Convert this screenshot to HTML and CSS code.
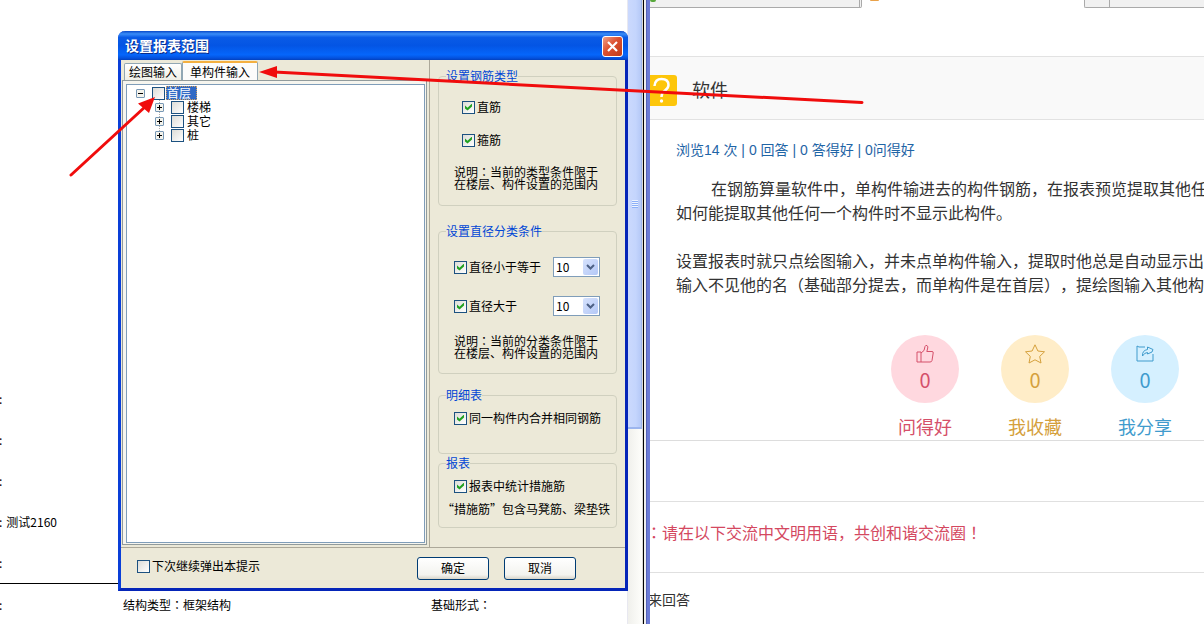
FILE: index.html
```html
<!DOCTYPE html>
<html lang="zh-CN">
<head>
<meta charset="utf-8">
<title>设置报表范围</title>
<link rel="stylesheet" href="styles.css">
</head>
<body>
<main class="desktop">
  <section class="report">
    <div class="sheet">
      <div class="sheet-row"><span>:</span></div>
      <div class="sheet-row"><span>:</span></div>
      <div class="sheet-row"><span>:</span></div>
      <div class="sheet-row"><span>:</span><span>测试2160</span></div>
      <div class="sheet-row ruled"><span>:</span></div>
      <div class="sheet-row columns"><span>:</span><span>结构类型<i class="mid" lang="zh-TW">：</i>框架结构</span><span>基础形式<i class="mid" lang="zh-TW">：</i></span></div>
    </div>
    <div class="scrollbar"><div class="thumb"><span class="grip"></span></div></div>
    <div class="frame-edge"></div>
  </section>

  <section class="page">
    <div class="strip">
      <div class="strip-left"><span class="dot-green"></span></div>
      <div class="strip-mid"><span class="dot-orange"></span></div>
      <div class="strip-right"></div>
    </div>
    <header class="question">
      <svg class="q-icon" viewBox="0 0 27 31" aria-hidden="true">
        <path d="M0 0H24Q27 0 27 3V28Q27 31 24 31H0Z" fill="#fdc60b"/>
        <path d="M4.500 11Q5 4 11.500 4Q18.500 4 18.500 10Q18.500 13 15 15.500Q11.500 18 11.500 22" fill="none" stroke="#fff" stroke-width="2.500"/>
        <circle cx="11.500" cy="26" r="1.700" fill="#fff"/>
      </svg>
      <h1>软件</h1>
    </header>
    <article class="post">
      <p class="meta">浏览14 次 | 0 回答 | 0 答得好 | 0问得好</p>
      <p class="text indent">在钢筋算量软件中，单构件输进去的构件钢筋，在报表预览提取其他任何</p>
      <p class="text">如何能提取其他任何一个构件时不显示此构件。</p>
      <p class="text gap">设置报表时就只点绘图输入，并未点单构件输入，提取时他总是自动显示出来</p>
      <p class="text">输入不见他的名（基础部分提去，而单构件是在首层），提绘图输入其他构件</p>
    </article>
    <div class="actions">
      <button class="action like" type="button">
        <span class="circle">
          <svg viewBox="0 0 20 20" aria-hidden="true"><path d="M2 8H6V18H2ZM6 9L9 6.500L10 2.500Q10.500 1 12 1.500Q13.500 2.500 12.500 5L11.800 7.500H17Q18.500 7.500 18.200 9L17 16.500Q16.700 18 15 18H6"/></svg>
          <span>0</span>
        </span>
        <span class="caption">问得好</span>
      </button>
      <button class="action star" type="button">
        <span class="circle">
          <svg viewBox="0 0 20 20" aria-hidden="true"><path d="M10 .8L12.900 7L19.500 7.800L14.700 12.400L16 19L10 15.800L4 19L5.300 12.400L.5 7.800L7.100 7Z"/></svg>
          <span>0</span>
        </span>
        <span class="caption">我收藏</span>
      </button>
      <button class="action share" type="button">
        <span class="circle">
          <svg viewBox="0 0 20 20" aria-hidden="true"><path d="M10 3H4L2 2V17H18V10M7.500 12Q7 6.500 12.500 5.500V3L18 5.500L17 8L12.500 10V8.500Q9.500 8.500 7.500 12Z"/></svg>
          <span>0</span>
        </span>
        <span class="caption">我分享</span>
      </button>
    </div>
    <div class="blank"></div>
    <p class="notice"><i class="mid" lang="zh-TW">：</i>请在以下交流中文明用语，共创和谐交流圈<i class="mid" lang="zh-TW">！</i></p>
    <p class="answer">来回答</p>
  </section>
</main>

<form class="dialog">
  <div class="titlebar">
    <h2>设置报表范围</h2>
    <button class="close" type="button" aria-label="关闭">
      <svg viewBox="0 0 19 19" aria-hidden="true"><path d="M5 5L14 14M14 5L5 14" stroke="#fff" stroke-width="2.200"/></svg>
    </button>
  </div>
  <div class="body">
    <div class="left">
      <div class="tabs">
        <button class="tab" type="button">绘图输入</button>
        <button class="tab active" type="button">单构件输入</button>
      </div>
      <div class="tree-frame">
        <ul class="tree">
          <li><span class="node minus"></span><label><input type="checkbox"><span class="selected">首层</span></label>
            <ul>
              <li><span class="node plus"></span><label><input type="checkbox"><span>楼梯</span></label></li>
              <li><span class="node plus"></span><label><input type="checkbox"><span>其它</span></label></li>
              <li><span class="node plus"></span><label><input type="checkbox"><span>桩</span></label></li>
            </ul>
          </li>
        </ul>
      </div>
    </div>
    <div class="right">
      <fieldset class="kinds">
        <legend>设置钢筋类型</legend>
        <label><input type="checkbox" checked><span>直筋</span></label>
        <label><input type="checkbox" checked><span>箍筋</span></label>
        <p>说明<i class="mid" lang="zh-TW">：</i>当前的类型条件限于<br>在楼层、构件设置的范围内</p>
      </fieldset>
      <fieldset class="diameters">
        <legend>设置直径分类条件</legend>
        <div class="pair">
          <label><input type="checkbox" checked><span>直径小于等于</span></label>
          <span class="combo"><select aria-label="直径小于等于"><option>10</option></select><svg viewBox="0 0 15 16" aria-hidden="true"><path d="M4 6L7.500 9.500L11 6"/></svg></span>
        </div>
        <div class="pair">
          <label><input type="checkbox" checked><span>直径大于</span></label>
          <span class="combo"><select aria-label="直径大于"><option>10</option></select><svg viewBox="0 0 15 16" aria-hidden="true"><path d="M4 6L7.500 9.500L11 6"/></svg></span>
        </div>
        <p>说明<i class="mid" lang="zh-TW">：</i>当前的分类条件限于<br>在楼层、构件设置的范围内</p>
      </fieldset>
      <fieldset class="detail">
        <legend>明细表</legend>
        <label><input type="checkbox" checked><span>同一构件内合并相同钢筋</span></label>
      </fieldset>
      <fieldset class="reports">
        <legend>报表</legend>
        <label><input type="checkbox" checked><span>报表中统计措施筋</span></label>
        <p class="quote">“措施筋”包含马凳筋、梁垫铁</p>
      </fieldset>
    </div>
  </div>
  <div class="footer">
    <label><input type="checkbox"><span>下次继续弹出本提示</span></label>
    <div class="buttons">
      <button class="push" type="button">确定</button>
      <button class="push" type="button">取消</button>
    </div>
  </div>
</form>

<svg class="marks" width="1204" height="624" viewBox="0 0 1204 624" aria-hidden="true">
  <path d="M71 175L146 106M274 72L862 102.500" stroke="#f00c0c" stroke-width="3" stroke-linecap="round"/>
  <path d="M155 97L138 103.500L149 113ZM259 72L277 66V78Z" fill="#f00c0c"/>
</svg>
</body>
</html>
```

FILE: styles.css
```css
* { box-sizing: border-box; }

body {
  margin: 0;
  background: #fff;
  color: #000;
  font: 12px/14px "Noto Sans CJK SC", sans-serif;
  text-spacing-trim: space-all;
  overflow: hidden;
}

p, h1, h2, ul { margin: 0; padding: 0; font-size: inherit; font-weight: normal; }
ul { list-style: none; }
button, select { font: inherit; color: inherit; padding: 0; margin: 0; }

/* Full-width punctuation centred in its cell */
.mid { font-style: normal; font-family: "Noto Sans CJK TC", sans-serif; }

.desktop {
  display: grid;
  grid-template-columns: 650px minmax(0, 1fr);
  min-height: 100vh;
}

/* Report preview behind the dialog */
.report { display: flex; min-width: 0; }

.sheet {
  flex: 1;
  display: flex;
  flex-direction: column;
  padding-top: 378px;
  overflow: hidden;
}

.sheet-row {
  display: flex;
  align-items: center;
  gap: 4px;
  height: 41px;
  margin-left: -1px;
  white-space: nowrap;
}
.ruled { height: 42px; border-bottom: 1px solid #000; }
.columns { display: grid; grid-template-columns: 120px 304px 1fr; }

.scrollbar {
  width: 15px;
  border-left: 1px solid #e8e8f0;
  background: linear-gradient(to right, #f0f0ec, #fefefb);
}
.thumb {
  display: grid;
  place-items: center;
  height: 429px;
  border: 1px solid #9cb5ee;
  border-width: 0 1px 2px 0;
  background: linear-gradient(to right, #cbd9fd, #c4d5fd 60%, #b5c9f7);
}
.grip {
  width: 6px;
  height: 8px;
  margin-bottom: 20px;
  background: repeating-linear-gradient(#eef4fe 0 1px, #8cb0f8 1px 2px);
}
.frame-edge {
  width: 8px;
  background: linear-gradient(to right, #d8d8d8 0 1px, #000 1px 2px, #eee 2px 4px, #5562b8 4px 5px, #6b7bd6 5px 8px);
}

/* Forum page */
.page { overflow: hidden; white-space: nowrap; color: #333; }

.strip { display: flex; height: 8px; }
.strip-left {
  width: 212px;
  border: 1px solid #aaa;
  border-width: 0 3px 1px 0;
  border-right-style: double;
  border-bottom-right-radius: 2px;
  background: #f1f1f1;
}
.dot-green, .dot-orange { display: block; height: 2px; border-radius: 0 0 6px 6px; }
.dot-green { width: 6px; background: #58a83c; }
.dot-orange { width: 9px; margin-left: 8px; height: 1px; background: #e9a24a; }
.strip-mid { width: 222px; }
.strip-right {
  flex: 1;
  border: 1px solid #aaa;
  border-width: 0 0 1px 1px;
  border-bottom-left-radius: 2px;
  background: linear-gradient(to right, #f1f1f1 24px, #aaa 24px 25px, #f1f1f1 25px);
}

.question {
  display: flex;
  align-items: center;
  gap: 15px;
  height: 64px;
  margin-top: 48px;
  padding-top: 4px;
  border: 1px solid #e2e2e2;
  border-width: 1px 0;
  background: #f9f9f9;
}
.q-icon { width: 27px; height: 31px; }
.question h1 { padding-bottom: 2px; font-size: 18px; line-height: 26px; }

.post { padding: 18px 0 0 26px; }
.meta {
  margin-bottom: 14px;
  font-family: "Liberation Sans", "Noto Sans CJK SC", sans-serif;
  font-size: 14px;
  line-height: 24px;
  color: #1f65a6;
}
.text { font-size: 16px; line-height: 24px; }
.indent { padding-left: 35px; }
.gap { margin-top: 24px; }

.actions {
  display: flex;
  justify-content: flex-end;
  gap: 42px;
  margin-top: 39px;
  padding-right: 25px;
  border-bottom: 1px solid #ddd;
}
.action {
  display: flex;
  flex-direction: column;
  align-items: center;
  gap: 11px;
  width: 68px;
  padding-bottom: 1px;
  border: 0;
  background: none;
}
.circle {
  display: flex;
  flex-direction: column;
  align-items: center;
  width: 68px;
  height: 68px;
  padding: 9px 0 0;
  border-radius: 50%;
  font-size: 20px;
  line-height: 32px;
}
.circle svg { width: 20px; height: 20px; fill: none; stroke: currentColor; stroke-width: 1; }
.caption { font-size: 18px; line-height: 25px; }
.like { color: #d5506a; }
.like .circle { background: #ffd8df; }
.star { color: #d5a03c; }
.star .circle { background: #ffedc8; }
.share { color: #3f9bcd; }
.share .circle { background: #d5f0ff; }

.blank { height: 61px; border-bottom: 1px solid #e0e0e0; }
.notice {
  margin-left: -4px;
  padding: 18px 0 28px;
  border-bottom: 1px solid #e0e0e0;
  font-size: 16px;
  line-height: 24px;
  color: #d4485f;
}
.answer { margin: 14px 0 0 -2px; font-size: 14px; line-height: 24px; }

/* Settings dialog */
.dialog {
  position: absolute;
  left: 118px;
  top: 31px;
  display: flex;
  flex-direction: column;
  width: 510px;
  border: 3px solid #0a3fd8;
  border-top: 0;
  border-right-color: #0525b8;
  border-bottom-color: #0525b8;
  border-radius: 7px 7px 0 0;
  background: #ece9d8;
  white-space: nowrap;
}

.titlebar {
  display: flex;
  align-items: center;
  justify-content: space-between;
  height: 29px;
  margin: 0 -3px;
  padding: 1px 5px 0 7px;
  border-radius: 7px 7px 0 0;
  background: linear-gradient(#0848c8, #3a8df8 10%, #0a5be6 22%, #0455e4 50%, #0566fb 82%, #0450dc 94%, #0340bc);
}
.titlebar h2 {
  padding-bottom: 2px;
  color: #fff;
  font-size: 14px;
  line-height: 18px;
  font-weight: bold;
  text-shadow: 1px 1px #0a2c88;
}
.close {
  display: grid;
  width: 21px;
  height: 21px;
  border: 1px solid #fff;
  border-radius: 3px;
  background: linear-gradient(135deg, #f0a088, #dc5030 45%, #c03c18);
}
.close svg { width: 19px; height: 19px; }

.body { display: flex; border-bottom: 1px solid #aca899; }

.left {
  display: flex;
  flex-direction: column;
  width: 309px;
  padding: 1px 2px 2px 1px;
  border-right: 1px solid #aca899;
}
.tabs { display: flex; align-items: flex-end; padding-left: 2px; }
.tab {
  width: 58px;
  height: 17px;
  border: 1px solid #91a7b4;
  border-bottom: 0;
  border-radius: 2px 2px 0 0;
  background: linear-gradient(#fff, #f0efe6);
  line-height: 16px;
}
.tab.active {
  width: 76px;
  height: 19px;
  border-top: 2px solid #f4b040;
  background: #fcfcfb;
}
.tree-frame {
  flex: 1;
  display: flex;
  padding: 3px 1px 1px 3px;
  border: 1px solid #919b9c;
  background: #f6f5ee;
}
.tree { flex: 1; border: 1px solid #7f9db9; background: #fff; padding: 1px 0 0 9px; }
.tree label { gap: 1px; }
.tree ul label { gap: 3px; }
.tree li { display: grid; grid-template-columns: 16px auto; align-items: center; justify-content: start; line-height: 14px; }
.tree li ul {
  grid-column: 1 / -1;
  padding-left: 19px;
  background: repeating-linear-gradient(#aaa 0 1px, transparent 1px 2px) 23px 0 / 1px 34px no-repeat;
}
.node {
  width: 9px;
  height: 9px;
  border: 1px solid #7898b5;
  border-radius: 1px;
  background:
    linear-gradient(#000, #000) center / 5px 1px no-repeat,
    #f4f3ec;
}
.plus {
  background:
    linear-gradient(#000, #000) center / 5px 1px no-repeat,
    linear-gradient(#000, #000) center / 1px 5px no-repeat,
    #f4f3ec;
}
.selected {
  width: 31px;
  border: 1px dotted #d0a060;
  background: #316ac5;
  color: #fff;
  line-height: 12px;
}

label { display: flex; align-items: center; gap: 2px; height: 14px; }

input[type="checkbox"] {
  appearance: none;
  display: grid;
  place-items: center;
  flex: none;
  width: 13px;
  height: 13px;
  margin: 0;
  border: 1px solid #1c5180;
  background: linear-gradient(135deg, #dcdcd7, #fff);
}
input[type="checkbox"]:checked::before {
  content: "";
  width: 7px;
  height: 7px;
  background: #21a121;
  clip-path: polygon(0 28%, 36% 62%, 100% 0, 100% 42%, 36% 100%, 0 70%);
}

.right { flex: 1; padding: 10px 8px 19px; }

fieldset {
  display: flex;
  flex-direction: column;
  min-width: 0;
  margin: 0;
  padding: 0 0 0 15px;
  border: 1px solid #d0d0bf;
  border-radius: 4px;
}
legend { margin-left: -8px; padding: 0; color: #0046d5; line-height: 12px; }
fieldset p { line-height: 12px; }
.kinds { padding-top: 18px; padding-bottom: 15px; margin-bottom: 19px; }
.kinds label { margin: 0 0 19px 8px; }
.diameters { padding-top: 20px; padding-bottom: 14px; margin-bottom: 15px; }
.pair { display: flex; align-items: center; justify-content: space-between; padding-right: 16px; margin-bottom: 19px; }
.detail { padding-top: 10px; padding-bottom: 28px; margin-bottom: 3px; }
.reports { padding-top: 10px; padding-bottom: 12px; }
.quote { margin: 10px 0 0 -12px; }

.combo { position: relative; display: flex; }
.combo select {
  appearance: none;
  width: 47px;
  height: 20px;
  padding-left: 2px;
  border: 1px solid #7f9db9;
  border-radius: 0;
  background: #fff;
}
.combo svg {
  position: absolute;
  right: 2px;
  top: 2px;
  width: 15px;
  height: 16px;
  border-radius: 2px;
  background: linear-gradient(135deg, #d6e2fd, #b4c8f6);
  fill: none;
  stroke: #4d6185;
  stroke-width: 2;
  pointer-events: none;
}

.footer {
  display: flex;
  align-items: center;
  justify-content: space-between;
  height: 40px;
  padding: 0 49px 0 16px;
}
.footer label { margin-bottom: 4px; }
.buttons { display: flex; gap: 15px; }
.push {
  width: 72px;
  height: 23px;
  border: 1px solid #003c74;
  border-radius: 3px;
  background: linear-gradient(#fff, #f3f3ef 80%, #d9d5ca);
}

/* Arrows drawn over both windows */
.marks { position: absolute; left: 0; top: 0; fill: none; pointer-events: none; }
```
